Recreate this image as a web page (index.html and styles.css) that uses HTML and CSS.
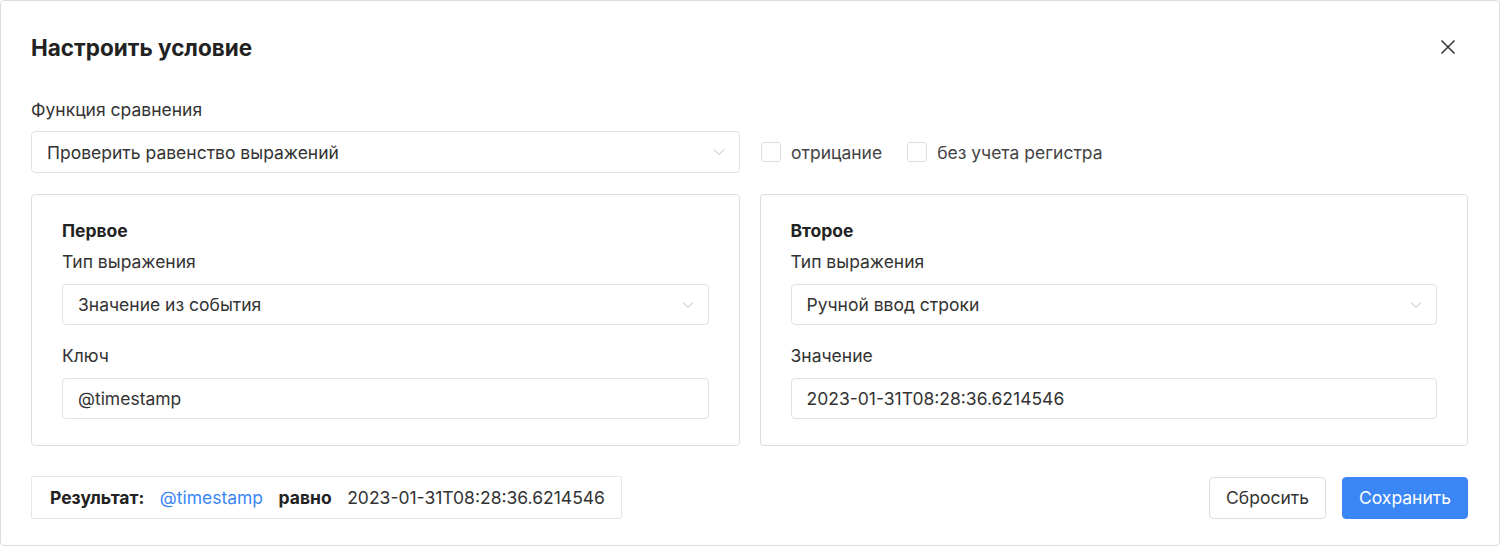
FILE: index.html
```html
<!DOCTYPE html>
<html lang="ru">
<head>
    <meta charset="UTF-8">
    <meta name="viewport" content="width=device-width, initial-scale=1.0">
    <title>Настроить условие</title>
    <link rel="stylesheet" href="styles.css">
</head>
<body>
    <div class="dialog">
        <header class="dialog-header">
            <h1 class="title">Настроить условие</h1>
            <button class="close-button" aria-label="Закрыть">
                <svg width="16" height="16" viewBox="0 0 16 16">
                    <path d="M1.5 1.5 L14.5 14.5 M14.5 1.5 L1.5 14.5" stroke="#333" stroke-width="1.5" fill="none"/>
                </svg>
            </button>
        </header>

        <div class="label">Функция сравнения</div>
        <div class="row">
            <div class="select wide">
                <span>Проверить равенство выражений</span>
                <svg class="chevron" width="12" height="8" viewBox="0 0 12 8"><path d="M1 1.5 L6 6.5 L11 1.5" stroke="#bbb" stroke-width="1" fill="none"/></svg>
            </div>
            <label class="checkbox"><span class="box"></span>отрицание</label>
            <label class="checkbox"><span class="box"></span>без учета регистра</label>
        </div>

        <div class="panels">
            <div class="panel">
                <div class="panel-title">Первое</div>
                <div class="label">Тип выражения</div>
                <div class="select">
                    <span>Значение из события</span>
                    <svg class="chevron" width="12" height="8" viewBox="0 0 12 8"><path d="M1 1.5 L6 6.5 L11 1.5" stroke="#bbb" stroke-width="1" fill="none"/></svg>
                </div>
                <div class="label spaced">Ключ</div>
                <div class="input">@timestamp</div>
            </div>
            <div class="panel">
                <div class="panel-title">Второе</div>
                <div class="label">Тип выражения</div>
                <div class="select">
                    <span>Ручной ввод строки</span>
                    <svg class="chevron" width="12" height="8" viewBox="0 0 12 8"><path d="M1 1.5 L6 6.5 L11 1.5" stroke="#bbb" stroke-width="1" fill="none"/></svg>
                </div>
                <div class="label spaced">Значение</div>
                <div class="input">2023-01-31T08:28:36.6214546</div>
            </div>
        </div>

        <footer class="dialog-footer">
            <div class="result">
                <b>Результат:</b>
                <span class="key">@timestamp</span>
                <b>равно</b>
                <span>2023-01-31T08:28:36.6214546</span>
            </div>
            <div class="button-container">
                <button class="button secondary">Сбросить</button>
                <button class="button primary">Сохранить</button>
            </div>
        </footer>
    </div>
</body>
</html>
```

FILE: styles.css
```css
body {
    font-family: Inter, "Noto Sans", Arial, sans-serif;
    margin: 0;
    padding: 0;
    background: #ffffff;
    color: #333333;
}

.dialog {
    box-sizing: border-box;
    width: 1500px;
    height: 546px;
    padding: 30px 31px 0 30px;
    background: #ffffff;
    border: 1px solid #dcdde0;
    border-radius: 4px;
}

.dialog-header {
    display: flex;
    justify-content: space-between;
    align-items: center;
    height: 32px;
    margin-bottom: 36px;
}

.title {
    margin: 0;
    font-size: 22.5px;
    font-weight: 700;
    color: #222222;
}

.close-button {
    display: flex;
    align-items: center;
    justify-content: center;
    width: 24px;
    height: 24px;
    padding: 0;
    margin-right: 8px;
    background: none;
    border: none;
    cursor: pointer;
}

.label {
    font-size: 17.5px;
    line-height: 22px;
    margin-bottom: 10px;
    color: #333333;
}

.label.spaced {
    margin-top: 20px;
}

.row {
    display: flex;
    align-items: center;
    gap: 21px;
}

.select,
.input {
    box-sizing: border-box;
    display: flex;
    align-items: center;
    justify-content: space-between;
    height: 42px;
    padding: 0 14px 0 15px;
    border: 1px solid #e0e1e4;
    border-radius: 4px;
    font-size: 17.5px;
    color: #333333;
    background: #ffffff;
}

.select.wide {
    width: 709px;
}

.checkbox {
    display: flex;
    align-items: center;
    gap: 10px;
    font-size: 17.5px;
    color: #444444;
    margin-right: 4px;
}

.box {
    box-sizing: border-box;
    width: 20px;
    height: 20px;
    border: 1px solid #dcdde0;
    border-radius: 3px;
    background: #ffffff;
}

.panels {
    display: grid;
    grid-template-columns: 1fr 1fr;
    gap: 20px;
    margin-top: 21px;
}

.panel {
    box-sizing: border-box;
    height: 252px;
    padding: 26px 30px 24px 30px;
    border: 1px solid #dcdde0;
    border-radius: 4px;
}

.panel-title {
    font-size: 17.5px;
    font-weight: 700;
    line-height: 20px;
    margin-bottom: 10px;
    color: #222222;
}

.panel .select,
.panel .input {
    height: 41px;
    margin-top: 11px;
}

.panel .label {
    margin-bottom: 0;
}

.dialog-footer {
    display: flex;
    justify-content: space-between;
    align-items: center;
    margin-top: 30px;
}

.result {
    box-sizing: border-box;
    display: flex;
    align-items: center;
    gap: 15.5px;
    height: 43px;
    padding: 0 16px 0 18px;
    border: 1px solid #e6e7ea;
    border-radius: 2px;
    font-size: 17.5px;
    color: #333333;
}

.result b {
    color: #222222;
}

.result .key {
    color: #3b86f5;
}

.button-container {
    display: flex;
    gap: 16px;
}

.button {
    box-sizing: border-box;
    height: 42px;
    padding: 0 16px;
    border-radius: 4px;
    font-family: inherit;
    font-size: 17.5px;
    cursor: pointer;
}

.secondary {
    background: #ffffff;
    color: #333333;
    border: 1px solid #dcdde0;
}

.primary {
    background: #3b86f5;
    color: #ffffff;
    border: 1px solid #3b86f5;
}
```
